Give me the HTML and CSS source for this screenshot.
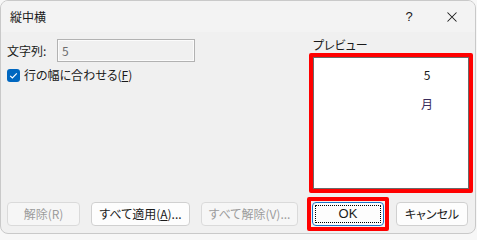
FILE: index.html
```html
<!DOCTYPE html>
<html lang="ja">
<head>
<meta charset="utf-8">
<title>縦中横</title>
<link rel="stylesheet" href="styles.css">
</head>
<body>
<div class="window">
  <div class="titlebar">
    <span class="title">縦中横</span>
    <span class="tb-btn help">?</span>
    <span class="tb-btn close">
      <svg width="10" height="10" viewBox="0 0 10 10"><path d="M0.5 0.5 L9.5 9.5 M9.5 0.5 L0.5 9.5" stroke="#1b1b1b" stroke-width="1.05" fill="none"/></svg>
    </span>
  </div>
  <div class="main">
    <div class="left">
      <div class="field-row">
        <span class="label">文字列:</span>
        <div class="input">5</div>
      </div>
      <div class="check-row">
        <span class="checkbox">
          <svg width="13" height="13" viewBox="0 0 13 13"><path d="M3.2 6.8 L5.4 9 L9.8 4.4" stroke="#fff" stroke-width="1.2" fill="none"/></svg>
        </span>
        <span class="check-label">行の幅に合わせる(<u>F</u>)</span>
      </div>
    </div>
    <div class="right">
      <div class="preview-label">プレビュー</div>
      <div class="hl-frame">
        <div class="preview">
          <div class="vtext">
            <span class="ch five">5</span>
            <span class="ch moon">月</span>
          </div>
        </div>
      </div>
    </div>
  </div>
  <div class="footer">
    <button class="btn b-remove" disabled>解除(R)</button>
    <button class="btn b-apply">すべて適用(<u>A</u>)...</button>
    <button class="btn b-removeall" disabled>すべて解除(V)...</button>
    <div class="hl-ok"><button class="btn b-ok">OK</button></div>
    <button class="btn b-cancel">キャンセル</button>
  </div>
</div>
</body>
</html>
```
FILE: styles.css
```css
* { box-sizing: border-box; }
html, body { margin: 0; padding: 0; }
body {
  background: #f7f7f7;
  font-family: "Noto Sans CJK JP", "Noto Sans", sans-serif;
  font-size: 12px;
  font-feature-settings: "palt";
  color: #1a1a1a;
  width: 477px;
  height: 237px;
  overflow: hidden;
}
.window {
  width: 476px;
  height: 234px;
  border: 1px solid #c9c9c9;
  border-radius: 8px;
  background: #f0f0f0;
  overflow: hidden;
  display: flex;
  flex-direction: column;
}
.titlebar {
  height: 31px;
  background: #f3f3f3;
  display: flex;
  align-items: center;
  padding-left: 9px;
}
.title { flex: 1; font-size: 12px; line-height: 16px; }
.tb-btn {
  width: 46px;
  height: 31px;
  display: flex;
  align-items: center;
  justify-content: center;
}
.help { font-family: "Liberation Sans", sans-serif; font-size: 13px; margin-right: -3px; }
.main {
  height: 165px;
  display: flex;
  padding-left: 6px;
}
.left { width: 302px; padding-top: 7px; }
.field-row { display: flex; align-items: center; height: 23px; }
.label { width: 50px; line-height: 16px; }
.input {
  width: 138px;
  height: 23px;
  border: 1px solid #b2b2b2;
  box-shadow: inset 0 0 0 1px #fbfbfb;
  background: #f0f0f0;
  color: #6d6d6d;
  padding-left: 4px;
  line-height: 21px;
  font-size: 12px;
}
.check-row { display: flex; align-items: center; margin-top: 6px; height: 14px; }
.checkbox {
  width: 13px;
  height: 13px;
  border-radius: 3px;
  background: #0067c0;
  display: flex;
}
.check-label { margin-left: 4px; line-height: 16px; }
.right { width: 164px; padding-top: 5px; display: flex; flex-direction: column; }
.preview-label { height: 16px; line-height: 16px; margin-left: 4px; }
.hl-frame {
  height: 140px;
  border: 4px solid #ff0000;
  border-radius: 2px;
  display: flex;
}
.preview {
  flex: 1;
  border: 1px solid #6a6a6a;
  background: #ffffff;
}
.vtext {
  width: 14px;
  margin-left: 106px;
  margin-top: 8px;
  display: flex;
  flex-direction: column;
  align-items: center;
}
.ch { line-height: 18px; color: #1a1a1a; font-feature-settings: normal; }
.moon { margin-top: 11px; color: #3a2c5c; }
.footer {
  height: 34px;
  display: flex;
  align-items: center;
  padding-left: 6px;
}
.btn {
  height: 24px;
  font-family: "Noto Sans CJK JP", "Noto Sans", sans-serif;
  font-size: 12px;
  font-feature-settings: "palt";
  color: #1a1a1a;
  background: #fdfdfd;
  border: 1px solid #d0d0d0;
  border-radius: 4px;
  padding: 0;
  line-height: 20px;
}
.btn:disabled { color: #9c9c9c; background: #f6f6f6; border-color: #dadada; }
.b-remove { width: 73px; margin-right: 11px; }
.b-apply { width: 99px; margin-right: 11px; }
.b-removeall { width: 97px; margin-right: 9px; }
.hl-ok {
  border: 4px solid #ff0000;
  border-radius: 2px;
  padding: 1px;
  margin-right: 7px;
  display: flex;
}
.b-ok {
  width: 72px;
  border-color: #1a73c8;
  outline: 1px dotted #000;
  outline-offset: -4px;
  font-family: "Liberation Sans", sans-serif;
  font-size: 13px;
}
.b-cancel { width: 72px; }
```
